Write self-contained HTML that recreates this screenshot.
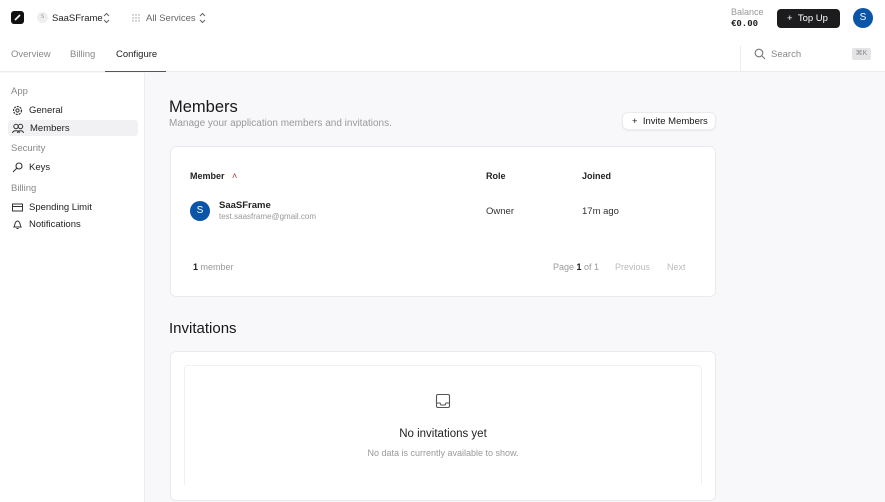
<!DOCTYPE html>
<html><head><style>
*{box-sizing:border-box;margin:0;padding:0}
body{width:885px;height:502px;overflow:hidden;font-family:"Liberation Sans",sans-serif;background:#f8f8fb;color:#18181b;position:relative}
.a{position:absolute}
.hdr{left:0;top:0;width:885px;height:72px;background:#fff;border-bottom:1px solid #ececf0}
.side{left:0;top:73px;width:145px;height:429px;background:#fff;border-right:1px solid #ececf0}
.t{font-size:9.5px;color:#888}
.nav{font-size:9.5px;color:#222;display:flex;align-items:center;gap:6px}
.card{background:#fff;border:1px solid #ebebef;border-radius:6px}
svg{display:block}
</style></head><body>
<div class="a hdr"></div>
<div class="a" style="left:11px;top:11px;width:13px;height:13px;background:#111;border-radius:3px"><svg width="13" height="13"><path d="M4 9L9 4" stroke="#fff" stroke-width="1.6"/></svg></div>
<div class="a" style="left:37px;top:12px;width:11px;height:11px;border-radius:50%;background:#eee;font-size:5px;color:#999;text-align:center;line-height:11px">S</div>
<div class="a" style="left:52px;top:13px;font-size:9.5px;color:#222">SaaSFrame</div>
<svg class="a" style="left:103px;top:12px" width="7" height="12"><path d="M1 4L3.5 1.5L6 4M1 8L3.5 10.5L6 8" fill="none" stroke="#666" stroke-width="1"/></svg>
<svg class="a" style="left:132px;top:14px" width="8" height="8"><g fill="#999"><circle cx="1" cy="1" r=".7"/><circle cx="4" cy="1" r=".7"/><circle cx="7" cy="1" r=".7"/><circle cx="1" cy="4" r=".7"/><circle cx="4" cy="4" r=".7"/><circle cx="7" cy="4" r=".7"/><circle cx="1" cy="7" r=".7"/><circle cx="4" cy="7" r=".7"/><circle cx="7" cy="7" r=".7"/></g></svg>
<div class="a" style="left:146px;top:13px;font-size:9.5px;color:#666">All Services</div>
<svg class="a" style="left:199px;top:12px" width="7" height="12"><path d="M1 4L3.5 1.5L6 4M1 8L3.5 10.5L6 8" fill="none" stroke="#666" stroke-width="1"/></svg>
<div class="a" style="left:731px;top:7px;font-size:9px;color:#999">Balance</div>
<div class="a" style="left:731px;top:19px;font-size:9px;font-family:'Liberation Mono',monospace;font-weight:bold;color:#222">€0.00</div>
<div class="a" style="left:777px;top:9px;width:63px;height:19px;background:#1c1c1f;border-radius:4px;color:#fff;font-size:9.5px;line-height:19px;padding-left:10px">+&nbsp;&nbsp;Top Up</div>
<div class="a" style="left:853px;top:8px;width:20px;height:20px;border-radius:50%;background:#0a55a8;color:#fff;font-size:10px;text-align:center;line-height:20px">S</div>
<div class="a" style="left:11px;top:49px;font-size:9.5px;color:#888">Overview</div>
<div class="a" style="left:70px;top:49px;font-size:9.5px;color:#888">Billing</div>
<div class="a" style="left:116px;top:49px;font-size:9.5px;color:#222">Configure</div>
<div class="a" style="left:105px;top:71px;width:61px;height:1px;background:#555"></div>
<div class="a" style="left:740px;top:46px;width:1px;height:26px;background:#ececf0"></div>
<svg class="a" style="left:754px;top:48px" width="12" height="12"><circle cx="5" cy="5" r="3.8" fill="none" stroke="#777" stroke-width="1.1"/><path d="M8 8L11 11" stroke="#777" stroke-width="1.1"/></svg>
<div class="a" style="left:771px;top:49px;font-size:9.5px;color:#888">Search</div>
<div class="a" style="left:852px;top:48px;width:19px;height:12px;background:#e4e4e7;border-radius:2px;font-size:7px;color:#888;text-align:center;line-height:12px">⌘K</div>
<div class="a side"></div>
<div class="a t" style="left:11px;top:86px">App</div>
<div class="a nav" style="left:12px;top:105px"><svg width="11" height="11"><circle cx="5.5" cy="5.5" r="4" fill="none" stroke="#333" stroke-width="1.2" stroke-dasharray="2 1"/><circle cx="5.5" cy="5.5" r="1.6" fill="none" stroke="#333"/></svg>General</div>
<div class="a" style="left:8px;top:120px;width:130px;height:16px;background:#f1f1f4;border-radius:3px"></div>
<div class="a nav" style="left:12px;top:123px"><svg width="12" height="11"><circle cx="4" cy="3.5" r="2.2" fill="none" stroke="#333"/><circle cx="8.5" cy="3.5" r="2.2" fill="none" stroke="#333"/><path d="M0.5 10C1 7 7 7 7.5 10M5.5 10C6 7 11 7 11.5 10" fill="none" stroke="#333"/></svg>Members</div>
<div class="a t" style="left:11px;top:143px">Security</div>
<div class="a nav" style="left:12px;top:162px"><svg width="11" height="11"><circle cx="7" cy="4" r="3" fill="none" stroke="#333" stroke-width="1.1"/><path d="M5 6L1 10" stroke="#333" stroke-width="1.1"/></svg>Keys</div>
<div class="a t" style="left:11px;top:183px">Billing</div>
<div class="a nav" style="left:12px;top:202px"><svg width="11" height="11"><rect x="0.5" y="2" width="10" height="7" fill="none" stroke="#333"/><path d="M0.5 4.5H10.5" stroke="#333"/></svg>Spending Limit</div>
<div class="a nav" style="left:12px;top:219px"><svg width="11" height="11"><path d="M2 8C3 7 2.5 2 5.5 2S8 7 9 8Z" fill="none" stroke="#333"/><path d="M4.5 9.5H6.5" stroke="#333"/></svg>Notifications</div>
<div class="a" style="left:169px;top:98px;font-size:16.5px">Members</div>
<div class="a" style="left:169px;top:118px;font-size:10px;color:#999">Manage your application members and invitations.</div>
<div class="a card" style="left:622px;top:112px;width:94px;height:18px;box-shadow:0 1px 2px rgba(0,0,0,.06);font-size:9.5px;line-height:17px;padding-left:9px">+&nbsp;&nbsp;Invite Members</div>
<div class="a card" style="left:170px;top:146px;width:546px;height:151px"></div>
<div class="a" style="left:190px;top:171px;font-size:9px;font-weight:bold;color:#222">Member&nbsp;&nbsp;&nbsp;<span style="color:#a33;font-weight:normal">˄</span></div>
<div class="a" style="left:486px;top:171px;font-size:9px;font-weight:bold;color:#222">Role</div>
<div class="a" style="left:582px;top:171px;font-size:9px;font-weight:bold;color:#222">Joined</div>
<div class="a" style="left:190px;top:201px;width:20px;height:20px;border-radius:50%;background:#0a55a8;color:#fff;font-size:10px;text-align:center;line-height:20px">S</div>
<div class="a" style="left:219px;top:200px;font-size:9.5px;font-weight:bold;color:#222">SaaSFrame</div>
<div class="a" style="left:219px;top:212px;font-size:8px;color:#999">test.saasframe@gmail.com</div>
<div class="a" style="left:486px;top:206px;font-size:9.5px;color:#333">Owner</div>
<div class="a" style="left:582px;top:206px;font-size:9.5px;color:#333">17m ago</div>
<div class="a" style="left:193px;top:262px;font-size:9px;color:#999"><b style="color:#222">1</b> member</div>
<div class="a" style="left:553px;top:262px;font-size:9px;color:#999">Page <b style="color:#222">1</b> of 1</div>
<div class="a" style="left:615px;top:262px;font-size:9px;color:#bbb">Previous</div>
<div class="a" style="left:667px;top:262px;font-size:9px;color:#bbb">Next</div>
<div class="a" style="left:169px;top:320px;font-size:15px">Invitations</div>
<div class="a card" style="left:170px;top:351px;width:546px;height:150px"></div>
<div class="a" style="left:184px;top:365px;width:518px;height:120px;border:1px solid #f0f0f3;border-bottom:none;border-radius:4px 4px 0 0"></div>
<svg class="a" style="left:435px;top:393px" width="16" height="16"><rect x="1.5" y="1.5" width="13" height="13" rx="1.5" fill="none" stroke="#555" stroke-width="1.1"/><path d="M1.5 10H5L6 12H10L11 10H14.5" fill="none" stroke="#555" stroke-width="1.1"/></svg>
<div class="a" style="left:170px;top:428px;width:546px;text-align:center;font-size:11.5px;color:#222">No invitations yet</div>
<div class="a" style="left:170px;top:448px;width:546px;text-align:center;font-size:9px;color:#999">No data is currently available to show.</div>
</body></html>
